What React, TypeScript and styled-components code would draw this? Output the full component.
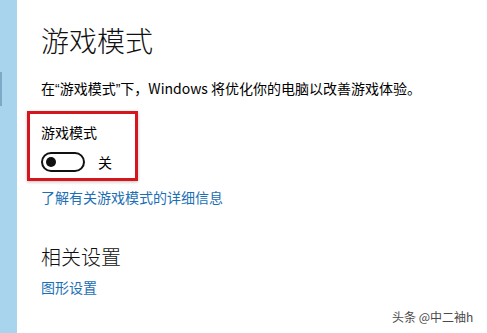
import React from "react";
import styled, { createGlobalStyle } from "styled-components";

const Global = createGlobalStyle`
  html, body { margin: 0; padding: 0; background: #fff; }
  body { font-family: "Noto Sans CJK SC", "Noto Sans", sans-serif; }
`;

const Page = styled.div`
  position: relative;
  width: 487px;
  height: 333px;
  display: flex;
  background: #fff;
  overflow: hidden;
`;

const Strip = styled.div`
  width: 17px;
  flex: none;
  background: #a9d4ee;
  display: flex;
  flex-direction: column;
`;

const Notch = styled.div`
  margin-top: 72px;
  width: 2px;
  height: 34px;
  background: #7ea9c6;
`;

const Content = styled.div`
  flex: 1;
  display: flex;
  flex-direction: column;
  align-items: flex-start;
  padding-left: 24px;
  color: #000;
`;

const Title = styled.h1`
  margin: 26px 0 0;
  font-size: 28px;
  line-height: 28px;
  font-weight: 300;
  color: #111;
`;

const Desc = styled.p`
  margin: 24px 0 0;
  font-size: 14px;
  line-height: 20px;
  white-space: nowrap;
`;

const Quote = styled.span`
  font-family: "Liberation Sans", sans-serif;
`;

const Highlight = styled.div`
  margin: 12px 0 0 -14px;
  width: 111px;
  height: 70px;
  box-sizing: border-box;
  border: 3px solid #d5161d;
  padding: 8px 0 0 11px;
  box-shadow: 0 1px 3px rgba(0, 0, 0, 0.25);
`;

const Label = styled.div`
  font-size: 14px;
  line-height: 20px;
`;

const ToggleRow = styled.div`
  margin-top: 10px;
  display: flex;
  align-items: center;
  gap: 13px;
`;

const Track = styled.div`
  width: 44px;
  height: 20px;
  box-sizing: border-box;
  border: 2px solid #111;
  border-radius: 10px;
  display: flex;
  align-items: center;
  padding-left: 3px;
`;

const Knob = styled.div`
  width: 10px;
  height: 10px;
  border-radius: 50%;
  background: #111;
`;

const State = styled.span`
  font-size: 14px;
  line-height: 20px;
`;

const Link = styled.a<{ $top: number }>`
  margin-top: ${(p) => p.$top}px;
  font-size: 14px;
  line-height: 20px;
  color: #1b6fb4;
  text-decoration: none;
`;

const Subtitle = styled.h2`
  margin: 36px 0 0;
  font-size: 20px;
  line-height: 28px;
  font-weight: 300;
  color: #111;
`;

const Watermark = styled.div`
  position: absolute;
  left: 392px;
  top: 309px;
  font-size: 12px;
  line-height: 16px;
  color: #4a4a4a;
  white-space: nowrap;
  text-shadow: 0 0 2px #fff;
`;

export default function App() {
  return (
    <>
      <Global />
      <Page>
        <Strip>
          <Notch />
        </Strip>
        <Content>
          <Title>游戏模式</Title>
          <Desc>
            在<Quote>“</Quote>游戏模式<Quote>”</Quote>下，Windows 将优化你的电脑以改善游戏体验。
          </Desc>
          <Highlight>
            <Label>游戏模式</Label>
            <ToggleRow>
              <Track>
                <Knob />
              </Track>
              <State>关</State>
            </ToggleRow>
          </Highlight>
          <Link $top={6}>了解有关游戏模式的详细信息</Link>
          <Subtitle>相关设置</Subtitle>
          <Link $top={6}>图形设置</Link>
        </Content>
        <Watermark>头条 @中二袖h</Watermark>
      </Page>
    </>
  );
}
